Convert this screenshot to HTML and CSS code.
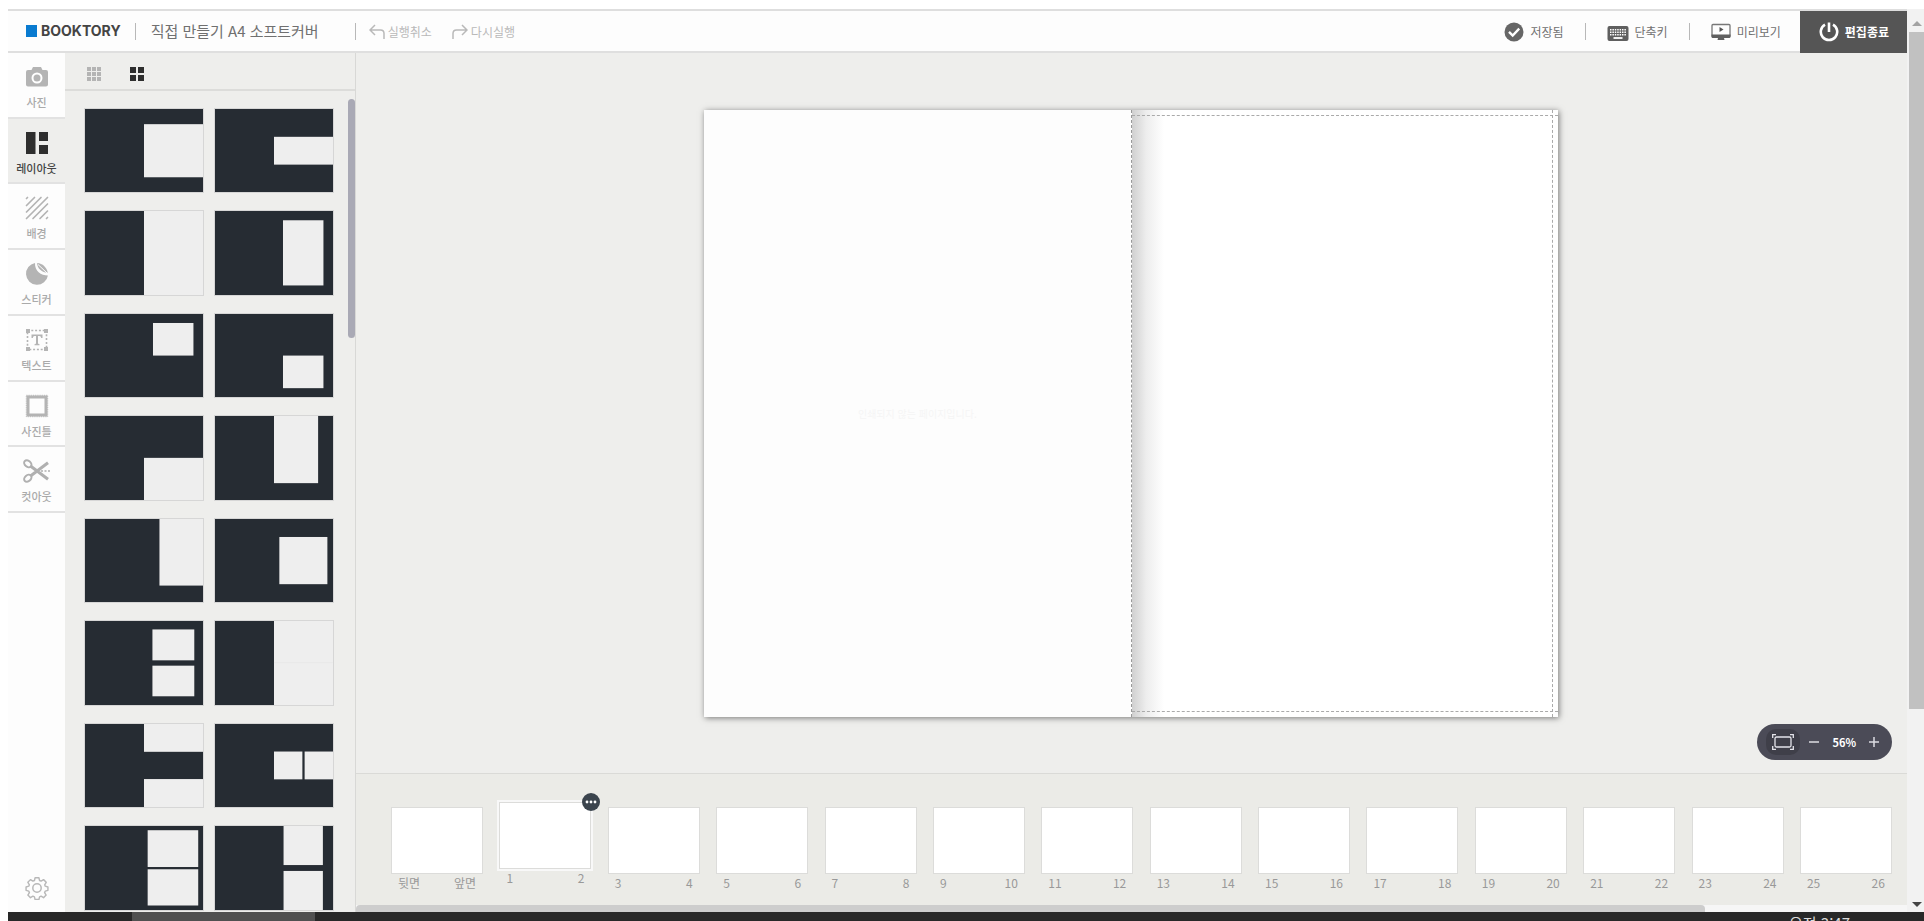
FILE: index.html
```html
<!DOCTYPE html>
<html lang="ko">
<head>
<meta charset="utf-8">
<title>BOOKTORY</title>
<link rel="stylesheet" href="styles.css">
</head>
<body>
<div class="window">
  <div class="app">
    <header class="topbar">
      <a class="logo" href="#"><span class="logo-mark"></span>BOOKTORY</a>
      <span class="divider"></span>
      <h1 class="title">직접 만들기 A4 소프트커버</h1>
      <span class="divider"></span>
      <div class="history">
        <button class="history-btn" type="button">
          <svg width="16" height="16" viewBox="0 0 16 16"><path d="M6 1 1 6l5 5M1 6h10.500Q15 6 15 9.500V15"/></svg>실행취소
        </button>
        <button class="history-btn" type="button">
          <svg width="16" height="16" viewBox="0 0 16 16"><path d="m10 1 5 5-5 5M15 6H4.500Q1 6 1 9.500V15"/></svg>다시실행
        </button>
      </div>
      <div class="actions">
        <button class="action" type="button">
          <svg width="20" height="20" viewBox="0 0 20 20"><circle cx="10" cy="10" r="9.500" fill="#666"/><path d="m5 9.800 3.700 3.700 6.500-6.800" fill="none" stroke="#fff" stroke-width="2.400"/></svg>저장됨
        </button>
        <span class="divider"></span>
        <button class="action" type="button">
          <svg width="22" height="20" viewBox="0 0 22 20"><rect x=".5" y="4" width="21" height="15" rx="2" fill="#5f5f5f"/><path d="M3 7.800h16M3 10.300h16M3 12.800h16" stroke="#fff" stroke-width="1.500" stroke-dasharray="1.500 .9"/><path d="M6.500 16h9" stroke="#fff" stroke-width="1.800"/></svg>단축키
        </button>
        <span class="divider"></span>
        <button class="action" type="button">
          <svg width="20" height="20" viewBox="0 0 20 20"><rect x="1" y="2.500" width="18" height="12.500" rx="1" fill="#fdfdfd" stroke="#777" stroke-width="1.300"/><path d="M.5 12.500h19v2q0 1.500-1.500 1.500h-5l.5 2h-7l.5-2h-5Q.5 16 .5 14.500z" fill="#5f5f5f"/><path d="m8.500 5 4 2.500-4 2.500z" fill="#555"/></svg>미리보기
        </button>
        <button class="exit" type="button">
          <svg width="20" height="20" viewBox="0 0 20 20"><path d="M6 2.700a8.200 8.200 0 1 0 8 0M10 .5v9.500" fill="none" stroke="#fff" stroke-width="2.600"/></svg>편집종료
        </button>
      </div>
    </header>

    <div class="workspace">
      <nav class="sidebar">
        <div class="tabs">
          <button class="tab" type="button">
            <svg width="24" height="24" viewBox="0 0 24 24"><path d="M8 2h8l1.500 3H21q2 0 2 2v12.500q0 2-2 2H3q-2 0-2-2V7q0-2 2-2h3.500z" fill="#b4b4b4"/><circle cx="12" cy="13" r="4.500" fill="none" stroke="#fff" stroke-width="2"/></svg>사진
          </button>
          <button class="tab tab-active" type="button">
            <svg width="24" height="24" viewBox="0 0 24 24"><path d="M1 1h9.500v22H1zM14 1h9v9h-9zM14 14h9v9h-9z" fill="#2e2e2e"/></svg>레이아웃
          </button>
          <button class="tab" type="button">
            <svg width="24" height="24" viewBox="0 0 24 24"><path d="M1.500 2.500l1-1M1.500 9.500l8-8M1.500 16l14.500-14.500M1.500 22.500l21-21M8 22.500 22.500 8M15 22.500l7.500-7.500M21.500 22.500l1-1" fill="none" stroke="#b4b4b4" stroke-width="1.700" stroke-linecap="round"/></svg>배경
          </button>
          <button class="tab" type="button">
            <svg width="24" height="24" viewBox="0 0 24 24"><path d="M10 1a11 11 0 1 0 12.900 12.500C16 13.500 9.500 9 10 1z" fill="#b4b4b4"/><path d="M12.200 1c5.500.3 9.500 4.500 10.600 9.800C17 10.500 12 6.500 12.200 1z" fill="#b4b4b4"/><path d="M13 2.500 22 11" stroke="#fff" stroke-width="1"/></svg>스티커
          </button>
          <button class="tab" type="button">
            <svg width="24" height="24" viewBox="0 0 24 24"><path d="M2.500 2.500h19v19h-19z" fill="none" stroke="#b4b4b4" stroke-width="1.600" stroke-dasharray="2 1.800"/><path d="M1 1h4v4H1zM19 1h4v4h-4zM1 19h4v4H1zM19 19h4v4h-4z" fill="#b4b4b4"/><path d="M6.500 6.500h11v3.500h-1.300q-.2-2-1.700-2H13V15q0 1.200 1.500 1.200v1h-5v-1q1.500 0 1.500-1.200V8H9.500q-1.500 0-1.700 2H6.500z" fill="#b4b4b4"/></svg>텍스트
          </button>
          <button class="tab" type="button">
            <svg width="24" height="24" viewBox="0 0 24 24"><path d="M3 3h18v18H3z" fill="none" stroke="#b4b4b4" stroke-width="3"/><path d="M1.300 1.300h21.400v21.400H1.300z" fill="none" stroke="#b4b4b4" stroke-width=".9" stroke-dasharray="1.200 1"/></svg>사진틀
          </button>
          <button class="tab" type="button">
            <svg width="28" height="24" viewBox="0 0 28 24"><g fill="none" stroke="#b0b0b0" stroke-width="2"><ellipse cx="4.800" cy="4.800" rx="3" ry="4" transform="rotate(-50 4.800 4.800)"/><ellipse cx="4.800" cy="19.200" rx="3" ry="4" transform="rotate(50 4.800 19.200)"/></g><path d="M7.500 17 25 3.800M7.500 7 25 20.200" stroke="#b0b0b0" stroke-width="3"/><path d="M18 12h10" stroke="#b0b0b0" stroke-width="1.500" stroke-dasharray="2 1.500"/></svg>컷아웃
          </button>
        </div>
        <button class="settings" type="button" aria-label="설정">
          <svg width="24" height="24" viewBox="0 0 24 24" fill="none" stroke="#b8b8b8" stroke-width="1.500" stroke-linejoin="round"><circle cx="12" cy="12" r="4.200"/><path d="M10 1.500h4l.7 2.900 1.600.7 2.600-1.600 2.800 2.800-1.600 2.600.6 1.500 2.800.8v3.600l-2.800.8-.7 1.600 1.600 2.600-2.700 2.700-2.600-1.600-1.600.7-.7 2.900h-4l-.7-2.900-1.600-.7-2.600 1.600-2.700-2.700L4 17.200l-.7-1.600-2.800-.8v-3.600l2.800-.8L4 8.900 2.400 6.300l2.700-2.800 2.600 1.600 1.600-.7z" transform="translate(.6 .3) scale(.95)"/></svg>
        </button>
      </nav>

      <aside class="panel">
        <div class="panel-head">
          <button class="view" type="button" aria-label="작게 보기">
            <svg width="14" height="14" viewBox="0 0 14 14" fill="#b4b4b4"><path d="M0 0h4v4H0zM5 0h4v4H5zM10 0h4v4h-4zM0 5h4v4H0zM5 5h4v4H5zM10 5h4v4h-4zM0 10h4v4H0zM5 10h4v4H5zM10 10h4v4h-4z"/></svg>
          </button>
          <button class="view" type="button" aria-label="크게 보기">
            <svg width="14" height="14" viewBox="0 0 14 14" fill="#2e2e2e"><path d="M0 0h6v6H0zM8 0h6v6H8zM0 8h6v6H0zM8 8h6v6H8z"/></svg>
          </button>
        </div>
        <div class="panel-body">
          <div class="layouts">
            <svg class="layout" viewBox="0 0 420 297"><rect x="210" y="54" width="212" height="189"/></svg>
            <svg class="layout" viewBox="0 0 420 297"><rect x="210" y="99" width="212" height="99"/></svg>
            <svg class="layout" viewBox="0 0 420 297"><rect x="210" y="-4" width="212" height="308"/></svg>
            <svg class="layout" viewBox="0 0 420 297"><rect x="242" y="33" width="144" height="232"/></svg>
            <svg class="layout" viewBox="0 0 420 297"><rect x="242" y="32" width="144" height="116"/></svg>
            <svg class="layout" viewBox="0 0 420 297"><rect x="242" y="148" width="144" height="116"/></svg>
            <svg class="layout" viewBox="0 0 420 297"><rect x="210" y="149" width="212" height="155"/></svg>
            <svg class="layout" viewBox="0 0 420 297"><rect x="210" y="-4" width="157" height="243"/></svg>
            <svg class="layout" viewBox="0 0 420 297"><rect x="265" y="-4" width="157" height="241"/></svg>
            <svg class="layout" viewBox="0 0 420 297"><rect x="229" y="64" width="171" height="168"/></svg>
            <svg class="layout" viewBox="0 0 420 297"><rect x="240" y="30" width="149" height="110"/><rect x="240" y="159" width="149" height="109"/></svg>
            <svg class="layout" viewBox="0 0 420 297"><rect x="210" y="-4" width="212" height="308"/><path d="M210 148h210" stroke="#e8e8e8" stroke-width="3"/></svg>
            <svg class="layout" viewBox="0 0 420 297"><rect x="210" y="-4" width="212" height="103"/><rect x="210" y="196" width="212" height="108"/></svg>
            <svg class="layout" viewBox="0 0 420 297"><rect x="210" y="98" width="101" height="99"/><rect x="319" y="98" width="103" height="99"/></svg>
            <svg class="layout" viewBox="0 0 420 297"><rect x="223" y="15" width="180" height="131"/><rect x="223" y="154" width="180" height="129"/></svg>
            <svg class="layout" viewBox="0 0 420 297"><rect x="244" y="-4" width="140" height="143"/><rect x="244" y="160" width="140" height="144"/></svg>
          </div>
          <div class="panel-thumb"></div>
        </div>
      </aside>

      <main class="editor">
        <section class="stage">
          <div class="book">
            <div class="page page-left"><p>인쇄되지 않는 페이지입니다.</p></div>
            <div class="page page-right">
              <span class="guide guide-top"></span>
              <span class="guide guide-bottom"></span>
              <span class="guide guide-side"></span>
            </div>
          </div>
          <div class="zoom">
            <button class="fit" type="button" aria-label="화면 맞춤">
              <svg width="22" height="16" viewBox="0 0 22 16" fill="none" stroke="#e4e4ea"><rect x="3" y="3" width="16" height="10" rx="1.500" stroke-width="1.300"/><path d="M.7 4V.7H4M18 .7h3.300V4M21.300 12v3.300H18M4 15.300H.7V12" stroke-width="1.300"/></svg>
            </button>
            <button class="step" type="button" aria-label="축소">
              <svg width="10" height="10" viewBox="0 0 10 10"><path d="M0 5h10" stroke="#dcdce2" stroke-width="1.500"/></svg>
            </button>
            <output>56%</output>
            <button class="step" type="button" aria-label="확대">
              <svg width="10" height="10" viewBox="0 0 10 10"><path d="M0 5h10M5 0v10" stroke="#dcdce2" stroke-width="1.500"/></svg>
            </button>
          </div>
        </section>
        <footer class="pages">
          <ol class="spreads">
            <li class="spread"><div class="sheet"></div><span>뒷면</span><span>앞면</span></li>
            <li class="spread spread-active"><div class="sheet"></div><span>1</span><span>2</span>
              <button class="more" type="button" aria-label="더보기"><svg width="12" height="4" viewBox="0 0 12 4" fill="#fff"><circle cx="2" cy="2" r="1.400"/><circle cx="6" cy="2" r="1.400"/><circle cx="10" cy="2" r="1.400"/></svg></button>
            </li>
            <li class="spread"><div class="sheet"></div><span>3</span><span>4</span></li>
            <li class="spread"><div class="sheet"></div><span>5</span><span>6</span></li>
            <li class="spread"><div class="sheet"></div><span>7</span><span>8</span></li>
            <li class="spread"><div class="sheet"></div><span>9</span><span>10</span></li>
            <li class="spread"><div class="sheet"></div><span>11</span><span>12</span></li>
            <li class="spread"><div class="sheet"></div><span>13</span><span>14</span></li>
            <li class="spread"><div class="sheet"></div><span>15</span><span>16</span></li>
            <li class="spread"><div class="sheet"></div><span>17</span><span>18</span></li>
            <li class="spread"><div class="sheet"></div><span>19</span><span>20</span></li>
            <li class="spread"><div class="sheet"></div><span>21</span><span>22</span></li>
            <li class="spread"><div class="sheet"></div><span>23</span><span>24</span></li>
            <li class="spread"><div class="sheet"></div><span>25</span><span>26</span></li>
          </ol>
          <div class="hscroll"><div class="hscroll-thumb"></div></div>
        </footer>
      </main>
    </div>
  </div>

  <div class="vscroll">
    <svg width="10" height="5" viewBox="0 0 10 5"><path d="M0 5 5 0l5 5z" fill="#a3a3a3"/></svg>
    <div class="vscroll-thumb"></div>
    <svg class="vscroll-down" width="10" height="5" viewBox="0 0 10 5"><path d="m0 0 5 5 5-5z" fill="#444"/></svg>
  </div>
</div>
<div class="taskbar"><span class="task"></span><time class="clock">오전 3:47</time></div>
</body>
</html>
```
FILE: styles.css
```css
* { box-sizing: border-box; }

body {
  margin: 0;
  height: 100vh;
  display: flex;
  flex-direction: column;
  overflow: hidden;
  background: #fff;
  color: #707070;
  font: 12px/16px "Noto Sans CJK KR", "Noto Sans", sans-serif;
}

button {
  margin: 0;
  padding: 0;
  border: 0;
  background: none;
  color: inherit;
  font: inherit;
  cursor: pointer;
}

svg { display: block; flex: none; }

.window {
  flex: 1;
  min-height: 0;
  display: flex;
  padding: 9px 0 0 8px;
}

.app {
  flex: 1;
  min-width: 0;
  display: flex;
  flex-direction: column;
  border-top: 2px solid #dedede;
}

/* Top bar */
.topbar {
  flex: none;
  height: 42px;
  display: flex;
  align-items: center;
  padding-left: 18px;
  background: #fdfdfd;
  border-bottom: 2px solid #dfdfdf;
}

.divider {
  flex: none;
  width: 1px;
  height: 17px;
  background: #b8b8b8;
}

.logo {
  display: flex;
  align-items: center;
  gap: 4px;
  margin-right: 14px;
  color: #444;
  font: bold 14px/16px Inter, sans-serif;
  text-decoration: none;
}

.logo-mark {
  width: 11px;
  height: 12px;
  background: #0a7bd0;
}

.title {
  margin: 0 36px 0 15px;
  font-size: 15px;
  line-height: 20px;
  font-weight: 400;
}

.history {
  display: flex;
  gap: 20px;
  margin-left: 13px;
  color: #b9b9b9;
}

.history-btn {
  display: flex;
  align-items: center;
  gap: 3px;
  padding-top: 2px;
}

.history-btn path {
  fill: none;
  stroke: #b9b9b9;
  stroke-width: 1.5;
}

.actions {
  display: flex;
  align-items: center;
  align-self: stretch;
  margin-left: auto;
}

.action {
  display: flex;
  align-items: center;
  gap: 6px;
  padding: 1px 21px 0;
}

.exit {
  display: flex;
  align-items: center;
  align-self: stretch;
  gap: 6px;
  margin: 0 0 -2px -2px;
  padding: 0 18px 0 19px;
  background: #555;
  color: #fff;
  font-weight: 700;
}

/* Left navigation */
.workspace {
  flex: 1;
  min-height: 0;
  display: flex;
}

.sidebar {
  flex: none;
  width: 57px;
  display: flex;
  flex-direction: column;
  justify-content: space-between;
  align-items: center;
  padding-bottom: 12px;
  background: #fdfdfd;
}

.tabs {
  width: 100%;
  height: 460px;
  display: flex;
  flex-direction: column;
}

.tab {
  flex: 1;
  display: flex;
  flex-direction: column;
  align-items: center;
  gap: 5px;
  padding-top: 12px;
  border-bottom: 2px solid #e2e2e2;
  color: #aaa;
  font-size: 11px;
  font-weight: 500;
}

.tab-active {
  background: #eeeeec;
  color: #444;
}

/* Layout panel */
.panel {
  flex: none;
  width: 291px;
  display: flex;
  flex-direction: column;
  background: #eeeeec;
  border-right: 1px solid #d8d8d6;
}

.panel-head {
  flex: none;
  height: 38px;
  display: flex;
  align-items: center;
  gap: 29px;
  padding-left: 22px;
  padding-top: 5px;
  border-bottom: 2px solid #dcdcda;
}

.panel-body {
  flex: 1;
  min-height: 0;
  display: flex;
  justify-content: space-between;
  overflow: hidden;
}

.layouts {
  display: grid;
  grid-template-columns: 118px 118px;
  align-content: start;
  gap: 19px 12px;
  padding: 18px 0 0 20px;
}

.layout {
  width: 100%;
  aspect-ratio: 420 / 297;
  background: #262c33;
  outline: 1px solid #d6d6d6;
}

.layout rect { fill: #eee; }

.panel-thumb {
  width: 7px;
  height: 239px;
  margin-top: 8px;
  border-radius: 4px;
  background: #a9a9b5;
}

/* Canvas */
.editor {
  flex: 1;
  min-width: 0;
  display: flex;
  flex-direction: column;
}

.stage {
  flex: 1;
  min-height: 0;
  position: relative;
  display: flex;
  align-items: center;
  justify-content: center;
  padding: 57px 57px 56px 56px;
  background: #eeeeec;
}

.book {
  height: 100%;
  aspect-ratio: 856 / 608;
  display: grid;
  grid-template-columns: 1fr 1fr;
  background: #fff;
  box-shadow: 1px 1px 6px rgba(0, 0, 0, .5);
}

.page { position: relative; }

.page-left {
  display: flex;
  align-items: center;
  justify-content: center;
  background: #fdfdfd;
  color: #f5f5f5;
  font-size: 10px;
}

.page-right {
  border-left: 1px dashed #999;
  background: linear-gradient(90deg, #d0d0d0, #ededed 14px, #fff 32px);
}

.guide { position: absolute; }

.guide-top,
.guide-bottom {
  left: 0;
  right: 0;
  border-top: 1px dashed #aaa;
}

.guide-top { top: 5px; }
.guide-bottom { bottom: 5px; }

.guide-side {
  top: 0;
  bottom: 0;
  right: 5px;
  border-left: 1px dashed #aaa;
}

.zoom {
  position: absolute;
  right: 15px;
  bottom: 13px;
  height: 36px;
  display: flex;
  align-items: center;
  gap: 9px;
  padding: 0 13px 0 9px;
  border-radius: 18px;
  background: #4b4b57;
  color: #fff;
  font-size: 11px;
  font-weight: 700;
}

.zoom output { margin: 0 4px; }

.fit {
  padding: 5px 6px;
  border-radius: 10px;
  background: #3f3f49;
}

/* Page strip */
.pages {
  flex: none;
  display: flex;
  flex-direction: column;
  background: #ebebe7;
  border-top: 1px solid #dadad7;
}

.spreads {
  display: flex;
  justify-content: space-between;
  margin: 0;
  padding: 33px 15px 14px 35px;
  list-style: none;
  color: #999;
}

.spread {
  width: 92px;
  display: flex;
  flex-wrap: wrap;
  justify-content: space-between;
  padding: 0 7px;
}

.sheet {
  flex: none;
  width: 92px;
  height: 67px;
  margin: 0 -7px 1px;
  border: 1px solid #dcdcda;
  background: #fff;
}

.spread-active {
  position: relative;
  top: -5px;
}

.spread-active .sheet { box-shadow: 0 0 0 2px #f8f8f8; }

.more {
  position: absolute;
  top: -9px;
  right: -9px;
  width: 18px;
  height: 18px;
  display: grid;
  place-items: center;
  border-radius: 50%;
  background: #3b444d;
}

.hscroll {
  height: 7px;
  background: #f6f6f6;
}

.hscroll-thumb {
  width: 87%;
  height: 100%;
  border-radius: 4px 4px 0 0;
  background: #cdcdcd;
}

/* Window scroll bar and task bar */
.vscroll {
  flex: none;
  width: 17px;
  display: flex;
  flex-direction: column;
  align-items: center;
  padding: 12px 0 5px 2px;
  background: #f2f2f2;
}

.vscroll-thumb {
  width: 100%;
  height: 677px;
  margin-top: 6px;
  background: #c1c1c1;
}

.vscroll-down { margin-top: auto; }

.taskbar {
  flex: none;
  height: 9px;
  display: flex;
  justify-content: space-between;
  margin-left: 8px;
  padding: 0 74px 0 124px;
  overflow: hidden;
  background: #282828;
  color: #ddd;
}

.task {
  width: 183px;
  background: #505050;
}

.clock {
  font-size: 15px;
  line-height: 22px;
}
```
